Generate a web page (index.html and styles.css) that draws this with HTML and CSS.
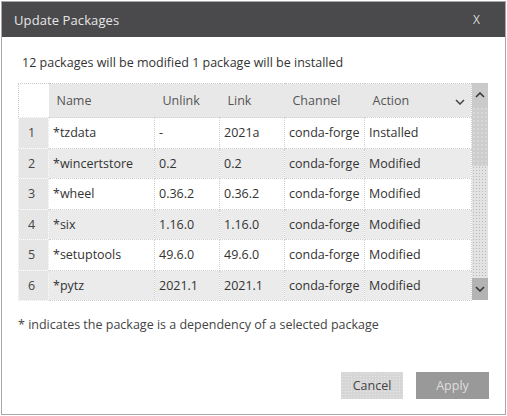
FILE: index.html
```html
<!DOCTYPE html>
<html>
<head>
<meta charset="utf-8">
<link rel="stylesheet" href="styles.css">
</head>
<body>
<div class="dialog">
  <div class="titlebar">
    <span class="title">Update Packages</span>
    <span class="close">X</span>
  </div>
  <div class="content">
    <p class="message">12 packages will be modified 1 package will be installed</p>
    <div class="grid">
      <table class="pkgs">
        <colgroup>
          <col class="c-idx"><col class="c-name"><col class="c-unlink"><col class="c-link"><col class="c-channel"><col class="c-action">
        </colgroup>
        <thead>
          <tr>
            <th class="idx"></th>
            <th>Name</th>
            <th>Unlink</th>
            <th>Link</th>
            <th>Channel</th>
            <th class="action-h">Action<svg class="chev" width="10" height="6" viewBox="0 0 10 6"><path d="M1 1 L5 5 L9 1" fill="none" stroke="#444" stroke-width="1.5"/></svg></th>
          </tr>
        </thead>
        <tbody>
          <tr class="odd"><td class="idx">1</td><td>*tzdata</td><td>-</td><td>2021a</td><td>conda-forge</td><td>Installed</td></tr>
          <tr class="even"><td class="idx">2</td><td>*wincertstore</td><td>0.2</td><td>0.2</td><td>conda-forge</td><td>Modified</td></tr>
          <tr class="odd"><td class="idx">3</td><td>*wheel</td><td>0.36.2</td><td>0.36.2</td><td>conda-forge</td><td>Modified</td></tr>
          <tr class="even"><td class="idx">4</td><td>*six</td><td>1.16.0</td><td>1.16.0</td><td>conda-forge</td><td>Modified</td></tr>
          <tr class="odd"><td class="idx">5</td><td>*setuptools</td><td>49.6.0</td><td>49.6.0</td><td>conda-forge</td><td>Modified</td></tr>
          <tr class="even"><td class="idx">6</td><td>*pytz</td><td>2021.1</td><td>2021.1</td><td>conda-forge</td><td>Modified</td></tr>
        </tbody>
      </table>
      <div class="scrollbar">
        <div class="sb-btn sb-up"><svg width="10" height="6" viewBox="0 0 10 6"><path d="M1 5 L5 1 L9 5" fill="none" stroke="#333" stroke-width="1.5"/></svg></div>
        <div class="sb-thumb"></div>
        <div class="sb-track"></div>
        <div class="sb-btn sb-down"><svg width="10" height="6" viewBox="0 0 10 6"><path d="M1 1 L5 5 L9 1" fill="none" stroke="#333" stroke-width="1.5"/></svg></div>
      </div>
    </div>
    <p class="note">* indicates the package is a dependency of a selected package</p>
    <div class="buttons">
      <button class="btn cancel">Cancel</button>
      <button class="btn apply">Apply</button>
    </div>
  </div>
</div>
</body>
</html>
```

FILE: styles.css
```css
* { box-sizing: border-box; }
html, body { margin: 0; padding: 0; background: #fff; }
body {
  padding: 1px;
  font-family: "Open Sans", "Noto Sans", sans-serif;
  color: #333;
}
.dialog {
  width: 505px;
  height: 414px;
  border: 1px solid #a8a8a8;
  display: flex;
  flex-direction: column;
  background: #fff;
}
.titlebar {
  height: 35px;
  background: #4a4a4c;
  display: flex;
  align-items: center;
  justify-content: space-between;
  padding: 0 25px 0 12px;
  color: #e6e6e6;
}
.title { font-size: 13px; letter-spacing: 0.1px; }
.close { font-size: 12px; color: #d8d8d8; }
.content {
  flex: 1;
  display: flex;
  flex-direction: column;
  padding: 0 16px;
}
.message {
  margin: 17px 0 0 4px;
  font-size: 12.5px;
  line-height: 18px;
  color: #333;
}
.grid {
  margin-top: 11px;
  display: flex;
  width: 470px;
}
.pkgs {
  width: 453px;
  border-collapse: collapse;
  table-layout: fixed;
  font-size: 12.5px;
  border: 1px dotted #c8c8c8;
}
.c-idx { width: 30px; }
.c-name { width: 106px; }
.c-unlink { width: 65px; }
.c-link { width: 65px; }
.c-channel { width: 80px; }
.c-action { width: 107px; }
th {
  height: 34px;
  text-align: left;
  font-weight: normal;
  color: #555;
  background: #e8e8e8;
  padding: 0 0 0 8px;
  white-space: nowrap;
}
th.idx { background: #fff; }
th.action-h { position: relative; }
.chev { position: absolute; right: 6px; top: 15px; }
td {
  height: 30.5px;
  padding: 0 0 0 4px;
  border: 1px dotted #cfcfcf;
  white-space: nowrap;
  overflow: hidden;
  color: #333;
}
td.idx {
  background: #e6e6e6;
  color: #444;
  padding-left: 9px;
  border-color: #e6e6e6;
}
tr.odd td:not(.idx) { background: #fff; }
tr.even td:not(.idx) { background: #ebebeb; }
.scrollbar {
  width: 17px;
  display: flex;
  flex-direction: column;
  height: 217px;
}
.sb-btn {
  display: flex;
  align-items: center;
  justify-content: center;
}
.sb-up { height: 24px; background: #cacaca; }
.sb-thumb {
  height: 59px;
  background-color: #cdcdcd;
  background-image: radial-gradient(#e2e2e2 0.6px, transparent 0.8px);
  background-size: 4px 4px;
}
.sb-track {
  flex: 1;
  background-color: #e3e3e3;
  background-image: radial-gradient(#b8b8b8 0.6px, transparent 0.8px);
  background-size: 3px 3px;
}
.sb-down { height: 22px; background: #b3b3b3; }
.note {
  margin: 15px 0 0 0;
  font-size: 12.5px;
  line-height: 18px;
  color: #444;
}
.buttons {
  margin-top: 38px;
  display: flex;
  justify-content: flex-end;
  gap: 13px;
  padding-right: 0;
  width: 471px;
}
.btn {
  height: 27px;
  border: none;
  font-family: "Open Sans", "Noto Sans", sans-serif;
  font-size: 12.5px;
  padding: 0;
}
.cancel {
  width: 62px;
  background-color: #d6d6d6;
  background-image: radial-gradient(#e6e6e6 0.6px, transparent 0.8px);
  background-size: 3px 3px;
  color: #444;
}
.apply {
  width: 73px;
  background: #999999;
  color: #dedede;
}
```
